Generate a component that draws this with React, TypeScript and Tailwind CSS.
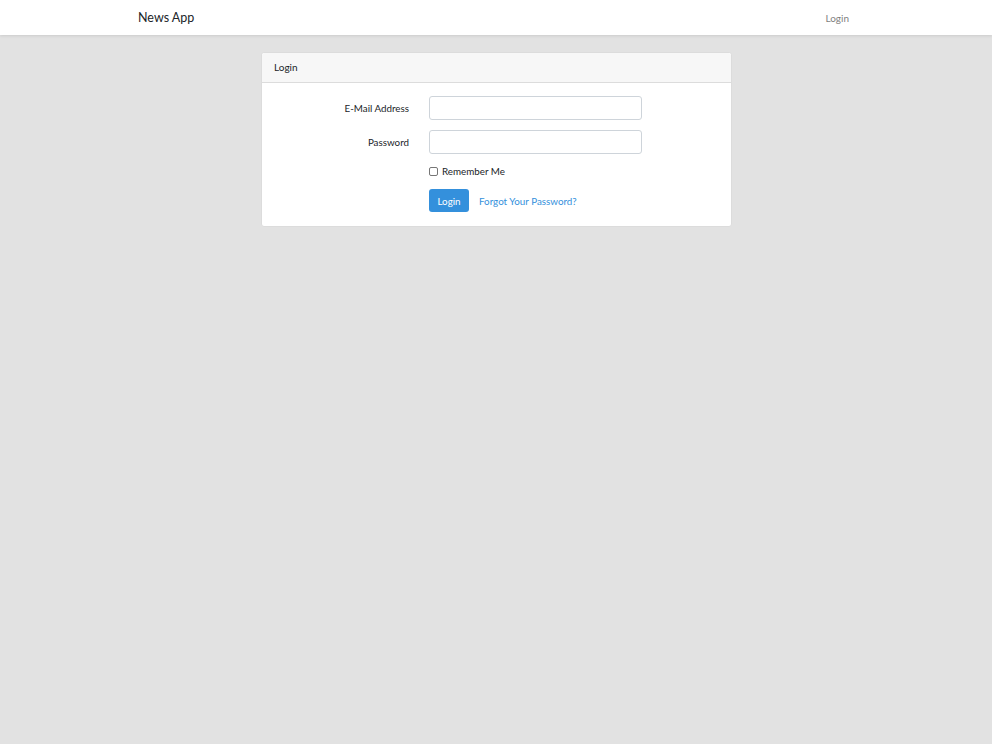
import React from "react";

export default function App() {
  return (
    <div
      className="min-h-[744px] bg-[#e2e2e2] text-[#212529]"
      style={{ fontFamily: 'Lato, "Noto Sans", sans-serif' }}
    >
      <nav className="h-[35px] bg-white shadow-[0_1px_3px_rgba(0,0,0,0.1)] flex items-center">
        <div className="w-full flex items-center justify-between pl-[138px] pr-[143px] pt-[1px]">
          <span className="text-[12.5px] text-[#212529]">News App</span>
          <span className="text-[10px] text-[#7f7f7f]">Login</span>
        </div>
      </nav>
      <div className="pt-[17px] pl-[261px]">
        <div className="w-[471px] bg-white border border-[#dcdcdc] rounded-[3px]">
          <div className="h-[30px] bg-[#f7f7f7] border-b border-[#dcdcdc] flex items-center px-[12px] text-[10px] rounded-t-[3px]">
            Login
          </div>
          <div className="px-[12px] pt-[13px] pb-[14px] text-[9.8px] leading-[14px]">
            <div className="flex items-center">
              <label className="w-[135px] text-right">E-Mail Address</label>
              <input className="ml-[20px] w-[213px] h-[24px] border border-[#ced4da] rounded-[3px] bg-white" />
            </div>
            <div className="flex items-center mt-[10px]">
              <label className="w-[135px] text-right">Password</label>
              <input type="password" className="ml-[20px] w-[213px] h-[24px] border border-[#ced4da] rounded-[3px] bg-white" />
            </div>
            <div className="flex items-center h-[14px] mt-[10px] ml-[155px]">
              <span className="w-[9px] h-[9px] border border-[#767676] rounded-[2px] bg-white" />
              <span className="ml-[4px]">Remember Me</span>
            </div>
            <div className="flex items-center mt-[11px] ml-[155px]">
              <button className="w-[40px] h-[23px] bg-[#3490dc] text-white rounded-[3px] text-[9.8px]">Login</button>
              <a className="ml-[10px] text-[#3490dc]">Forgot Your Password?</a>
            </div>
          </div>
        </div>
      </div>
    </div>
  );
}
